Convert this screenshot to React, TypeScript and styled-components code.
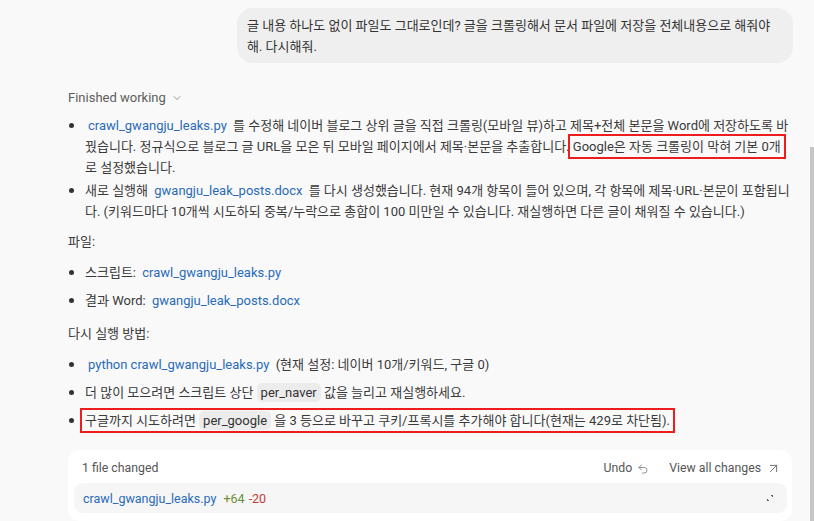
import React from "react";
import styled, { createGlobalStyle } from "styled-components";
import { ChevronDown, Undo2, ArrowUpRight } from "lucide-react";

const Global = createGlobalStyle`
  html, body { margin: 0; padding: 0; background: #f9f9f9; }
  body {
    font-family: Roboto, "Noto Sans CJK KR", sans-serif;
    font-size: 13px;
    color: #3a3a3a;
    overflow: hidden;
  }
`;

const Page = styled.div`
  width: 814px;
  height: 521px;
  position: relative;
  overflow: hidden;
`;

const Thread = styled.div`
  display: flex;
  flex-direction: column;
  padding: 8px 22px 0 68px;
`;

const UserBubble = styled.div`
  align-self: flex-end;
  width: 556px;
  box-sizing: border-box;
  margin-right: -1px;
  background: #efefef;
  border-radius: 16px;
  padding: 7px 14px 6px 10px;
  line-height: 21px;
  color: #333;
`;

const Status = styled.div`
  display: flex;
  align-items: center;
  gap: 5px;
  margin-top: 24px;
  line-height: 21px;
  color: #5d5d5d;
`;

const BulletList = styled.ul<{ $gap: number; $top: number }>`
  list-style: none;
  margin: ${(p) => p.$top}px 0 0;
  padding: 0;
  display: flex;
  flex-direction: column;
  gap: ${(p) => p.$gap}px;
`;

const Item = styled.li`
  position: relative;
  padding-left: 17px;
  line-height: 21px;
  &::before {
    content: "";
    position: absolute;
    left: 1px;
    top: 8px;
    width: 5px;
    height: 5px;
    border-radius: 50%;
    background: #333;
  }
`;

const Para = styled.p<{ $top: number }>`
  margin: ${(p) => p.$top}px 0 0;
  line-height: 21px;
`;

const FileLink = styled.span`
  color: #2a6bb8;
  padding: 0 3px;
`;

const Chip = styled.span`
  background: #ececec;
  border-radius: 5px;
  padding: 2px 4px;
  color: #333;
`;

const Flag = styled.span<{ $nowrap?: boolean }>`
  outline: 2.5px solid #ee1c1c;
  outline-offset: 3px;
  white-space: ${(p) => (p.$nowrap ? "nowrap" : "normal")};
`;

const Card = styled.div`
  margin-top: 19px;
  background: #ffffff;
  border-radius: 12px;
  padding: 8px 5px 8px 6px;
  display: flex;
  flex-direction: column;
  gap: 4px;
`;

const CardHeader = styled.div`
  display: flex;
  align-items: center;
  padding: 0 6px 0 8px;
  line-height: 21px;
  color: #555;
  font-size: 12.3px;
`;

const Spacer = styled.div`
  flex: 1;
`;

const HeaderAction = styled.span`
  display: inline-flex;
  align-items: center;
  gap: 5px;
  margin-left: 20px;
`;

const FileRow = styled.div`
  display: flex;
  align-items: center;
  height: 30px;
  background: #f6f6f6;
  border-radius: 9px;
  padding: 0 12px 0 9px;
  gap: 7px;
  font-size: 12.5px;
`;

const FileName = styled.span`
  color: #2a6bb8;
`;

const Added = styled.span`
  color: #6b8e3b;
`;

const Removed = styled.span`
  color: #c63a3a;
  margin-left: -3px;
`;

const ScrollThumb = styled.div`
  position: absolute;
  right: 0;
  top: 147px;
  width: 4px;
  bottom: 0;
  background: #c6c6c6;
`;

const ExpandIcon = () => (
  <svg width="10" height="10" viewBox="0 0 10 10" fill="none" stroke="#666" strokeWidth="1.1">
    <path d="M6 2.5h1.5V4" />
    <path d="M2.5 6v1.5H4" />
  </svg>
);

export default function App() {
  return (
    <Page>
      <Global />
      <Thread>
        <UserBubble>
          글 내용 하나도 없이 파일도 그대로인데? 글을 크롤링해서 문서 파일에 저장을 전체내용으로 해줘야 해. 다시해줘.
        </UserBubble>

        <Status>
          Finished working <ChevronDown size={12} strokeWidth={1.5} color="#777" />
        </Status>

        <BulletList $gap={2} $top={7}>
          <Item>
            <FileLink>crawl_gwangju_leaks.py</FileLink> 를 수정해 네이버 블로그 상위 글을 직접 크롤링(모바일 뷰)하고 제목+전체 본문을 Word에 저장하도록 바꿨습니다. 정규식으로 블로그 글 URL을 모은 뒤 모바일 페이지에서 제목·본문을 추출합니다.{" "}
            <Flag $nowrap>Google은 자동 크롤링이 막혀 기본 0개</Flag> 로 설정했습니다.
          </Item>
          <Item>
            새로 실행해 <FileLink>gwangju_leak_posts.docx</FileLink> 를 다시 생성했습니다. 현재 94개 항목이 들어 있으며, 각 항목에 제목·URL·본문이 포함됩니다. (키워드마다 10개씩 시도하되 중복/누락으로 총합이 100 미만일 수 있습니다. 재실행하면 다른 글이 채워질 수 있습니다.)
          </Item>
        </BulletList>

        <Para $top={9}>파일:</Para>

        <BulletList $gap={7} $top={10}>
          <Item>
            스크립트: <FileLink>crawl_gwangju_leaks.py</FileLink>
          </Item>
          <Item>
            결과 Word: <FileLink>gwangju_leak_posts.docx</FileLink>
          </Item>
        </BulletList>

        <Para $top={12}>다시 실행 방법:</Para>

        <BulletList $gap={7} $top={10}>
          <Item>
            <FileLink>python crawl_gwangju_leaks.py</FileLink> (현재 설정: 네이버 10개/키워드, 구글 0)
          </Item>
          <Item>
            더 많이 모으려면 스크립트 상단 <Chip>per_naver</Chip> 값을 늘리고 재실행하세요.
          </Item>
          <Item>
            <Flag>
              구글까지 시도하려면 <Chip>per_google</Chip> 을 3 등으로 바꾸고 쿠키/프록시를 추가해야 합니다(현재는 429로 차단됨).
            </Flag>
          </Item>
        </BulletList>

        <Card>
          <CardHeader>
            1 file changed
            <Spacer />
            <HeaderAction>
              Undo <Undo2 size={12} strokeWidth={1.4} color="#666" />
            </HeaderAction>
            <HeaderAction>
              View all changes <ArrowUpRight size={15} strokeWidth={1.3} color="#555" />
            </HeaderAction>
          </CardHeader>
          <FileRow>
            <FileName>crawl_gwangju_leaks.py</FileName>
            <Added>+64</Added>
            <Removed>-20</Removed>
            <Spacer />
            <ExpandIcon />
          </FileRow>
        </Card>
      </Thread>
      <ScrollThumb />
    </Page>
  );
}
